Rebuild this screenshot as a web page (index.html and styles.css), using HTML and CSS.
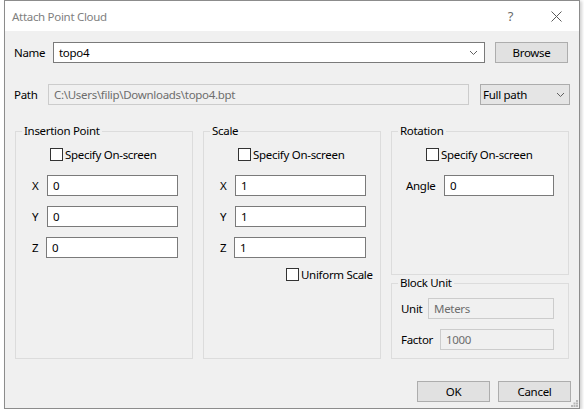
FILE: index.html
```html
<!DOCTYPE html>
<html>
<head>
<meta charset="utf-8">
<link rel="stylesheet" href="styles.css">
</head>
<body>
<div class="window">
  <div class="titlebar">
    <span class="title">Attach Point Cloud</span>
    <span class="help">?</span>
    <svg class="close" width="11" height="11" viewBox="0 0 11 11"><path d="M0.5 0.5 L10.5 10.5 M10.5 0.5 L0.5 10.5" stroke="#5a5a5a" stroke-width="1" fill="none"/></svg>
  </div>
  <div class="content">
    <div class="row name-row">
      <span class="lbl name-lbl">Name</span>
      <div class="combo name-combo">
        <span class="combo-text">topo4</span>
        <svg class="chev" width="7" height="4" viewBox="0 0 7 4"><path d="M0 0 L3.5 3.5 L7 0" stroke="#606060" fill="none"/></svg>
      </div>
      <div class="btn browse">Browse</div>
    </div>
    <div class="row path-row">
      <span class="lbl path-lbl">Path</span>
      <div class="field disabled path-field">C:\Users\filip\Downloads\topo4.bpt</div>
      <div class="combo gray-combo">
        <span class="combo-text">Full path</span>
        <svg class="chev" width="7" height="4" viewBox="0 0 7 4"><path d="M0 0 L3.5 3.5 L7 0" stroke="#606060" fill="none"/></svg>
      </div>
    </div>
    <div class="groups">
      <div class="group g-insert">
        <span class="gtitle">Insertion Point</span>
        <div class="check"><span class="box"></span><span>Specify On-screen</span></div>
        <div class="frow first"><span class="flbl">X</span><div class="field">0</div></div>
        <div class="frow"><span class="flbl">Y</span><div class="field">0</div></div>
        <div class="frow"><span class="flbl">Z</span><div class="field wide">0</div></div>
      </div>
      <div class="group g-scale">
        <span class="gtitle">Scale</span>
        <div class="check"><span class="box"></span><span>Specify On-screen</span></div>
        <div class="frow first"><span class="flbl">X</span><div class="field">1</div></div>
        <div class="frow"><span class="flbl">Y</span><div class="field">1</div></div>
        <div class="frow"><span class="flbl">Z</span><div class="field wide">1</div></div>
        <div class="check uniform"><span class="box"></span><span>Uniform Scale</span></div>
      </div>
      <div class="group g-rot">
        <span class="gtitle">Rotation</span>
        <div class="check"><span class="box"></span><span>Specify On-screen</span></div>
        <div class="frow first"><span class="flbl angle-lbl">Angle</span><div class="field angle">0</div></div>
      </div>
      <div class="group g-unit">
        <span class="gtitle">Block Unit</span>
        <div class="frow unit-row"><span class="flbl unit-lbl">Unit</span><div class="field disabled unit">Meters</div></div>
        <div class="frow"><span class="flbl unit-lbl">Factor</span><div class="field disabled factor">1000</div></div>
      </div>
    </div>
    <div class="buttons">
      <div class="btn ok">OK</div>
      <div class="btn cancel">Cancel</div>
    </div>
  </div>
  <svg class="grip" width="7" height="7" viewBox="0 0 7 7"><g fill="#b8b8b8"><rect x="5" y="0" width="2" height="2"/><rect x="2.5" y="2.5" width="2" height="2"/><rect x="5" y="2.5" width="2" height="2"/><rect x="0" y="5" width="2" height="2"/><rect x="2.5" y="5" width="2" height="2"/><rect x="5" y="5" width="2" height="2"/></g></svg>
</div>
</body>
</html>
```
FILE: styles.css
```css
html, body {
  margin: 0;
  padding: 0;
  background: #ffffff;
}
body {
  font-family: "Noto Sans", "Liberation Sans", sans-serif;
  font-size: 11.5px;
  letter-spacing: -0.3px;
  color: #000;
}
.window {
  position: relative;
  margin-left: 4px;
  width: 576px;
  height: 409px;
  box-sizing: border-box;
  border: 1px solid #8c8c8c;
  background: #f0f0f0;
  box-shadow: 2px 1px 3px rgba(0,0,0,0.18);
}
.titlebar {
  height: 30px;
  background: #ffffff;
  display: flex;
  align-items: center;
}
.title {
  margin-left: 7px;
  color: #808080;
  flex: 1;
}
.help {
  color: #6a6a6a;
  font-size: 13px;
  margin-right: 38px;
}
.close {
  margin-right: 17px;
}
.content {
  padding: 11px 0 0 10px;
}
.row {
  display: flex;
  align-items: center;
  height: 21px;
}
.lbl {
  margin-left: -1px;
}
.name-lbl { width: 39px; }
.path-lbl { width: 34px; }
.path-row { margin-top: 21px; }
.combo {
  box-sizing: border-box;
  height: 21px;
  display: flex;
  align-items: center;
  position: relative;
}
.name-combo {
  width: 432px;
  background: #fff;
  border: 1px solid #7a7a7a;
}
.combo-text { padding-left: 5px; flex: 1; }
.name-combo .chev { margin-right: 7px; }
.gray-combo {
  width: 90px;
  margin-left: 11px;
  background: #e5e5e5;
  border: 1px solid #acacac;
}
.gray-combo .combo-text { padding-left: 2px; }
.gray-combo .chev { margin-right: 5px; }
.btn {
  box-sizing: border-box;
  height: 21px;
  background: #e1e1e1;
  border: 1px solid #adadad;
  display: flex;
  align-items: center;
  justify-content: center;
}
.browse {
  width: 73px;
  margin-left: 10px;
}
.field {
  box-sizing: border-box;
  height: 21px;
  background: #fff;
  border: 1px solid #7a7a7a;
  padding-left: 5px;
  display: flex;
  align-items: center;
  width: 131px;
}
.field.disabled {
  background: #f0f0f0;
  border-color: #cccccc;
  color: #6d6d6d;
}
.path-field { width: 421px; }
.groups {
  margin-top: 26px;
  display: grid;
  grid-template-columns: 178px 178px 178px;
  grid-template-rows: 144px 76px;
  column-gap: 10px;
  row-gap: 8px;
}
.group {
  position: relative;
  border: 1px solid #dcdcdc;
  box-sizing: border-box;
}
.g-insert { grid-row: 1 / 3; grid-column: 1; }
.g-scale { grid-row: 1 / 3; grid-column: 2; }
.g-rot { grid-row: 1; grid-column: 3; }
.g-unit { grid-row: 2; grid-column: 3; }
.gtitle {
  position: absolute;
  top: -9px;
  left: 6px;
  padding: 0 2px;
  background: #f0f0f0;
  line-height: 16px;
}
.check {
  display: flex;
  align-items: center;
  margin-top: 16px;
  margin-left: 34px;
  height: 13px;
}
.box {
  width: 13px;
  height: 13px;
  box-sizing: border-box;
  border: 1px solid #333;
  background: #fff;
  margin-right: 2px;
}
.frow {
  display: flex;
  align-items: center;
  margin-top: 10px;
}
.frow.first { margin-top: 14px; }
.flbl {
  width: 15px;
  padding-left: 16px;
}
.field.wide { width: 132px; margin-left: -1px; }
.check.uniform {
  margin-top: 10px;
  margin-left: 82px;
}
.angle-lbl { width: 38px; padding-left: 14px; }
.field.angle { width: 110px; }
.unit-row { margin-top: 14px; }
.unit-lbl { padding-left: 9px; width: auto; }
.field.unit { width: 126px; margin-left: auto; margin-right: 14px; }
.field.factor { width: 114px; margin-left: auto; margin-right: 14px; }
.buttons {
  display: flex;
  justify-content: flex-end;
  margin-top: 22px;
  padding-right: 8px;
  gap: 8px;
}
.ok, .cancel { width: 73px; }
.grip {
  position: absolute;
  right: 1px;
  bottom: 1px;
}
```
